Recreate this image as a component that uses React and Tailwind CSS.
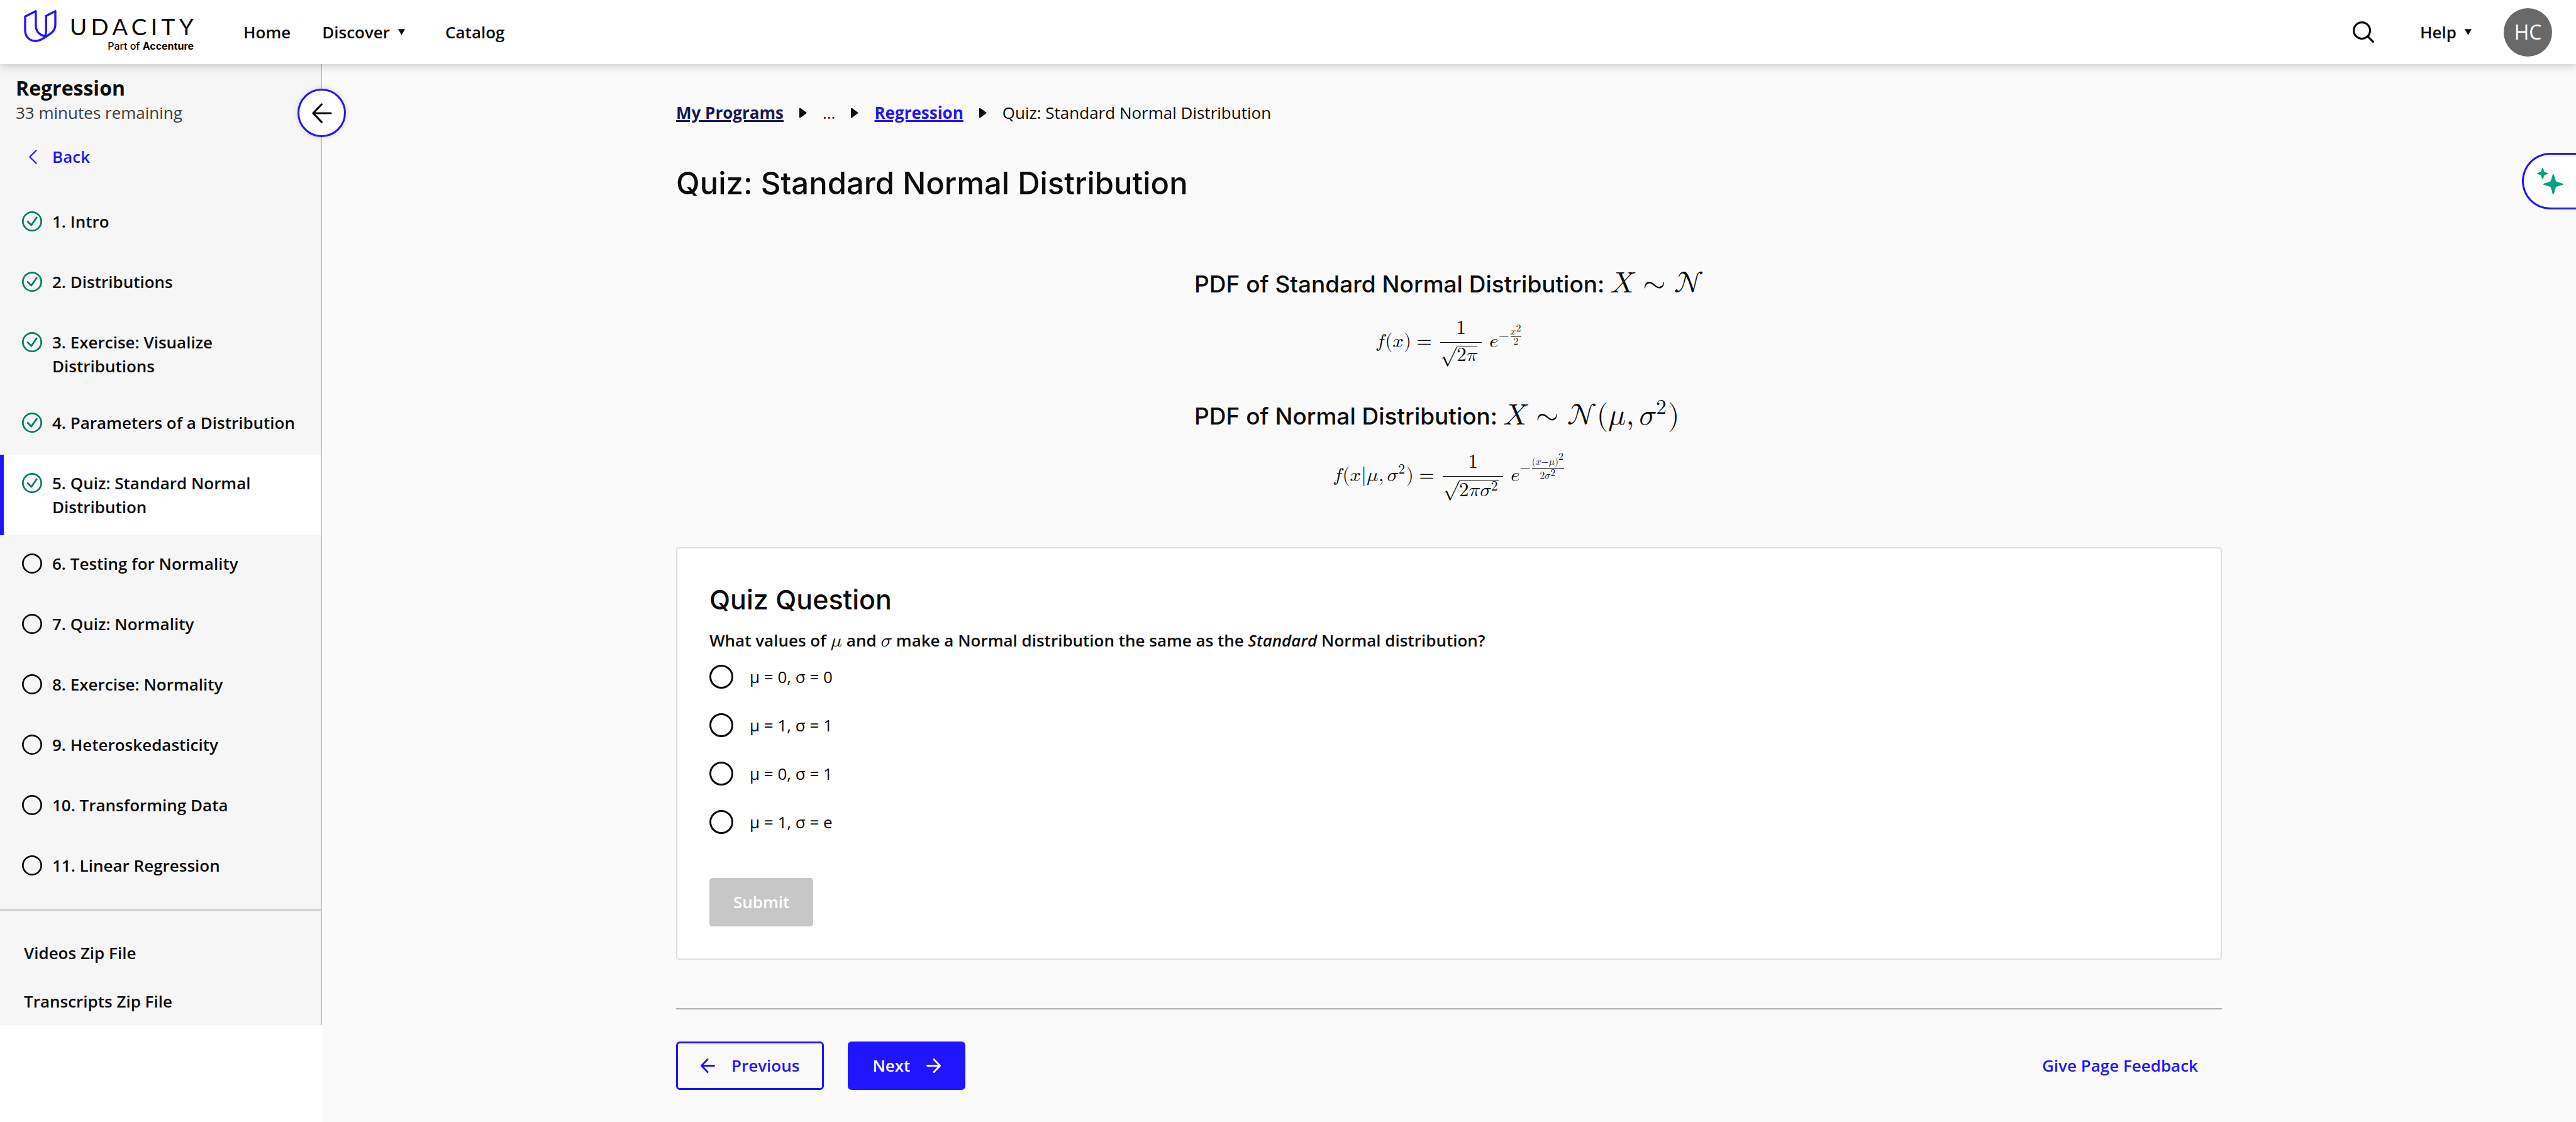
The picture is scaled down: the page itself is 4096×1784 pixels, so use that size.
import { useState } from "react";

const LESSONS = [
  { label: "1. Intro", done: true },
  { label: "2. Distributions", done: true },
  { label: "3. Exercise: Visualize Distributions", done: true },
  { label: "4. Parameters of a Distribution", done: true },
  { label: "5. Quiz: Standard Normal Distribution", done: true, current: true },
  { label: "6. Testing for Normality" },
  { label: "7. Quiz: Normality" },
  { label: "8. Exercise: Normality" },
  { label: "9. Heteroskedasticity" },
  { label: "10. Transforming Data" },
  { label: "11. Linear Regression" },
];

const ANSWERS = ["μ = 0, σ = 0", "μ = 1, σ = 1", "μ = 0, σ = 1", "μ = 1, σ = e"];

function UdacityMark() {
  return (
    <svg viewBox="0 0 66 64" className="h-[51px] w-[53px] shrink-0" fill="none" stroke="#2015ff" strokeWidth="4.200" strokeLinejoin="round" strokeLinecap="round" aria-hidden="true">
      <path d="M23.500 2.200 L2.200 13 V40 C2.200 53 11 61.800 23 61.800 C30 61.800 35 59 40 55.500 L53 47 C60 42.500 62.500 37 62.500 29 V2.200 L44 11.500 V42 C44 47 43.500 49.500 41.500 51.500 C31 50.500 23.500 42 23.500 31 Z" />
      <path d="M41.500 51.500 L40 55.500" />
    </svg>
  );
}

function DownCaret() {
  return (
    <svg viewBox="0 0 14 12" className="h-[10px] w-[11px]" aria-hidden="true">
      <path d="M0 0 H14 L7 12 Z" fill="#0b0b0b" />
    </svg>
  );
}

function RightCaret() {
  return (
    <svg viewBox="0 0 12 15" className="h-[15px] w-[12px]" aria-hidden="true">
      <path d="M0 0 L2 0 L12 7.500 L2 15 L0 15 Z" fill="#0b0b0b" />
    </svg>
  );
}

function ArrowIcon({ className, flip, strokeWidth = 3 }) {
  return (
    <svg viewBox="0 0 24 24" className={className} fill="none" stroke="currentColor" strokeWidth={strokeWidth} strokeLinecap="round" strokeLinejoin="round" aria-hidden="true">
      {flip ? <path d="M1.500 12 H22 M12.500 1.500 L22.500 12 L12.500 22.500" /> : <path d="M22.500 12 H2 M11.500 1.500 L1.500 12 L11.500 22.500" />}
    </svg>
  );
}

function StatusIcon({ done }) {
  return (
    <svg viewBox="0 0 40 40" className="h-8 w-8 shrink-0" fill="none" aria-hidden="true">
      <circle cx="20" cy="20" r="18.300" stroke={done ? "#067d68" : "#0b0b0b"} strokeWidth="3.400" />
      {done && <path d="M11.500 20.500 L18.500 27.500 L29 12.500" stroke="#067d68" strokeWidth="3.600" strokeLinecap="round" strokeLinejoin="round" />}
    </svg>
  );
}

function Header() {
  return (
    <header className="relative z-20 flex h-[102px] items-center bg-white px-[38px] font-semibold shadow-[0_3px_13px_rgba(0,0,0,0.2)]">
      <a href="#home" className="flex w-[278px] items-start gap-[20px]">
        <UdacityMark />
        <span className="flex flex-col pt-[8px] text-right">
          <span className="font-[Lato] text-[37px] leading-[36px] font-normal tracking-[0.17em] text-[#0b0b0b]">UDACITY</span>
          <span className="pr-[6px] font-[Inter] text-[16px] leading-[26px] font-medium text-black">
            Part of <b className="font-bold">Accenture</b>
          </span>
        </span>
      </a>
      <nav className="ml-[71px] flex items-center">
        <a href="#home">Home</a>
        <button type="button" className="ml-[50px] flex items-center gap-[13px]">
          Discover <DownCaret />
        </button>
        <a href="#catalog" className="ml-[64px]">Catalog</a>
      </nav>
      <div className="ml-auto flex items-center">
        <button type="button" aria-label="Search">
          <svg viewBox="0 0 42 42" className="h-[34px] w-[34px]" fill="none" stroke="#0b0b0b" strokeWidth="4" strokeLinecap="round" aria-hidden="true">
            <circle cx="18" cy="18" r="16" />
            <path d="M29.500 29.500 L40 40" />
          </svg>
        </button>
        <button type="button" className="ml-[73px] flex items-center gap-[13px]">
          Help <DownCaret />
        </button>
        <button type="button" aria-label="Account" className="ml-[51px] flex h-[77px] w-[77px] items-center justify-center rounded-full bg-[#696969] text-[32px] font-normal text-white">
          HC
        </button>
      </div>
    </header>
  );
}

function Sidebar() {
  return (
    <aside className="relative w-[512px] shrink-0 self-start border-r-2 border-[#c7c7c7] bg-[#f6f6f6] pb-[19px] font-semibold">
      <button
        type="button"
        aria-label="Collapse sidebar"
        className="absolute top-[39px] -right-[40px] z-10 flex h-[77px] w-[77px] items-center justify-center rounded-full border-3 border-[#2015ff] bg-white shadow-[0_0_8px_rgba(0,0,0,0.15)]"
      >
        <ArrowIcon className="h-8 w-8" strokeWidth={2.4} />
      </button>
      <div className="px-[25px] pt-[18px]">
        <h2 className="text-[32px] leading-[40px] font-bold">Regression</h2>
        <p className="leading-[38px] font-normal text-[#3d3d3d]">33 minutes remaining</p>
      </div>
      <a href="#back" className="mt-[32px] flex items-center gap-[23px] pl-[45px] text-[#2015ff]">
        <svg viewBox="0 0 15 27" className="h-[23px] w-[15px]" fill="none" stroke="currentColor" strokeWidth="2.500" strokeLinecap="round" strokeLinejoin="round" aria-hidden="true">
          <path d="M13.500 1.500 L1.500 13.500 L13.500 25.500" />
        </svg>
        <span className="leading-[38px]">Back</span>
      </a>
      <ol className="mt-[39px]">
        {LESSONS.map((l) => (
          <li key={l.label}>
            <a
              href="#lesson"
              aria-current={l.current ? "page" : undefined}
              className={
                "flex min-h-24 items-start gap-[16px] py-[26px] pr-[26px] " +
                (l.current ? "border-l-[6px] border-[#2015ff] bg-white pl-[29px]" : "pl-[35px]")
              }
            >
              <span className="flex h-[38px] items-center">
                <StatusIcon done={l.done} />
              </span>
              <span className="leading-[38px]">{l.label}</span>
            </a>
          </li>
        ))}
      </ol>
      <div className="mt-[19px] flex flex-col gap-[39px] border-t-2 border-[#c7c7c7] px-[38px] pt-[48px] leading-[38px]">
        <a href="#videos">Videos Zip File</a>
        <a href="#transcripts">Transcripts Zip File</a>
      </div>
    </aside>
  );
}

function Breadcrumb() {
  return (
    <nav aria-label="Breadcrumb">
      <ol className="flex items-center gap-[25px] leading-[38px]">
        <li><a href="#programs" className="font-bold text-[#171a53] underline decoration-[3px]">My Programs</a></li>
        <li><RightCaret /></li>
        <li>...</li>
        <li><RightCaret /></li>
        <li><a href="#regression" className="font-bold text-[#2015ff] underline decoration-[3px]">Regression</a></li>
        <li><RightCaret /></li>
        <li>Quiz: Standard Normal Distribution</li>
      </ol>
    </nav>
  );
}

function StandardPdf() {
  return (
    <math display="block" className="text-[31px]">
      <mi>f</mi><mo stretchy="false">(</mo><mi>x</mi><mo stretchy="false">)</mo><mo>=</mo>
      <mspace width="5px" />
      <mfrac><mn>1</mn><mrow><msqrt><mn>2</mn><mi>π</mi></msqrt><mspace width="-6px" /></mrow></mfrac>
      <mspace width="12px" />
      <msup>
        <mi>e</mi>
        <mrow><mo>−</mo><mspace width="2px" /><mfrac><msup><mi>x</mi><mn className="text-[16px]">2</mn></msup><mn>2</mn></mfrac></mrow>
      </msup>
    </math>
  );
}

function GeneralPdf() {
  return (
    <math display="block" className="text-[31px]">
      <mi>f</mi><mo stretchy="false">(</mo><mi>x</mi><mo stretchy="false" lspace="0" rspace="0">|</mo><mi>μ</mi><mo>,</mo>
      <msup><mi>σ</mi><mn>2</mn></msup><mo stretchy="false">)</mo><mo>=</mo>
      <mspace width="5px" />
      <mfrac>
        <mn>1</mn>
        <mrow><msqrt><mn>2</mn><mi>π</mi><msup><mi>σ</mi><mn>2</mn></msup></msqrt><mspace width="-6px" /></mrow>
      </mfrac>
      <mspace width="12px" />
      <msup>
        <mi>e</mi>
        <mrow>
          <mo>−</mo>
          <mspace width="2px" />
          <mfrac>
            <mrow>
              <mo stretchy="false">(</mo><mi>x</mi><mo lspace="0" rspace="0">−</mo><mi>μ</mi>
              <msup><mo stretchy="false">)</mo><mn className="text-[16px]">2</mn></msup>
            </mrow>
            <mrow><mn>2</mn><msup><mi>σ</mi><mn className="text-[16px]">2</mn></msup></mrow>
          </mfrac>
        </mrow>
      </msup>
    </math>
  );
}

function Formulas() {
  return (
    <section className="mx-auto mt-[98px] w-fit">
      <h2 className="flex h-[60px] items-baseline gap-[9px] font-[Inter] text-[37px] leading-[60px] font-medium">
        PDF of Standard Normal Distribution:
        <math className="text-[47px] font-normal"><mi>X</mi><mo>∼</mo><mi>𝒩</mi></math>
      </h2>
      <div className="mt-[28px] h-[82px]"><StandardPdf /></div>
      <h2 className="mt-[40px] flex h-[60px] items-baseline gap-[9px] font-[Inter] text-[37px] leading-[60px] font-medium">
        PDF of Normal Distribution:
        <math className="text-[47px] font-normal">
          <mi>X</mi><mo>∼</mo><mi>𝒩</mi><mo stretchy="false">(</mo><mi>μ</mi><mo>,</mo>
          <msup><mi>σ</mi><mn>2</mn></msup><mo stretchy="false">)</mo>
        </math>
      </h2>
      <div className="mt-[28px] h-[82px]"><GeneralPdf /></div>
    </section>
  );
}

function QuizCard() {
  const [answer, setAnswer] = useState(null);
  return (
    <form className="mt-[68px] rounded-[5px] border-2 border-[#dedede] bg-white px-[51px] pt-[50px] pb-[51px]" onSubmit={(e) => e.preventDefault()}>
      <h2 className="font-[Inter] text-[43px] leading-[62px] font-medium">Quiz Question</h2>
      <fieldset className="mt-[15px]">
        <legend className="leading-[38px] font-semibold">
          What values of <math className="text-[31px] font-normal"><mi>μ</mi></math> and <math className="text-[31px] font-normal"><mi>σ</mi></math> make a Normal distribution the same as the <em>Standard</em> Normal distribution?
        </legend>
        <div className="mt-[20px] flex flex-col gap-[39px]">
          {ANSWERS.map((a) => (
            <label key={a} className="flex items-center gap-[26px] leading-[38px]">
              <input
                type="radio"
                name="answer"
                checked={answer === a}
                onChange={() => setAnswer(a)}
                className="h-[38px] w-[38px] appearance-none rounded-full border-3 border-[#0b0b0b] bg-white checked:border-[10px]"
              />
              {a}
            </label>
          ))}
        </div>
      </fieldset>
      <button type="submit" disabled={answer === null} className="mt-[70px] h-[77px] rounded-[5px] bg-[#2015ff] px-[38px] font-semibold text-white disabled:bg-[#c7c7c7]">
        Submit
      </button>
    </form>
  );
}

function PageFooter() {
  return (
    <footer className="mt-[77px] flex items-center gap-[38px] border-t-2 border-[#afafaf] pt-[51px] font-semibold">
      <button type="button" className="flex h-[77px] items-center gap-[26px] rounded-[6px] border-3 border-[#2015ff] px-[36px] text-[#2015ff]">
        <ArrowIcon className="h-[23px] w-[23px]" /> Previous
      </button>
      <button type="button" className="flex h-[77px] items-center gap-[26px] rounded-[6px] bg-[#2015ff] px-[39px] text-white">
        Next <ArrowIcon flip className="h-[23px] w-[23px]" />
      </button>
      <a href="#feedback" className="mr-[38px] ml-auto text-[#2015ff]">Give Page Feedback</a>
    </footer>
  );
}

export default function App() {
  return (
    <div className="flex min-h-screen flex-col bg-white font-['Open_Sans',sans-serif] text-[26px] text-[#0b0b0b]">
      <Header />
      <div className="flex flex-1">
        <Sidebar />
        <main className="min-w-0 flex-1 bg-[#fafafa] px-[38px] pt-[58px] pb-[51px]">
          <div className="mx-auto max-w-[2458px]">
            <Breadcrumb />
            <h1 className="mt-[62px] font-[Inter] text-[49px] leading-[64px] font-medium">Quiz: Standard Normal Distribution</h1>
            <Formulas />
            <QuizCard />
            <PageFooter />
          </div>
        </main>
      </div>
      <button
        type="button"
        aria-label="Open AI assistant"
        className="absolute top-[243px] right-0 z-10 flex h-[90px] w-[86px] items-center rounded-l-[45px] border-3 border-r-0 border-[#2015ff] bg-white pl-[21px]"
      >
        <svg viewBox="0 0 52 52" className="h-[42px] w-[42px]" fill="#02a281" aria-hidden="true">
          <path d="M11 0 Q12 0 12.500 2 L14 7.500 L20 9.500 Q22 10 22 11 Q22 12 20 12.500 L14 14.500 L12.500 20 Q12 22 11 22 Q10 22 9.500 20 L8 14.500 L2 12.500 Q0 12 0 11 Q0 10 2 9.500 L8 7.500 L9.500 2 Q10 0 11 0 Z" />
          <path d="M32 12 Q33 12 33.500 14 L36.500 24.500 Q37 26.500 39 27.200 L50 30.500 Q52 31 52 32 Q52 33 50 33.500 L39 36.800 Q37 37.500 36.500 39.500 L33.500 50 Q33 52 32 52 Q31 52 30.500 50 L27.500 39.500 Q27 37.500 25 36.800 L14 33.500 Q12 33 12 32 Q12 31 14 30.500 L25 27.200 Q27 26.500 27.500 24.500 L30.500 14 Q31 12 32 12 Z" />
        </svg>
      </button>
    </div>
  );
}
